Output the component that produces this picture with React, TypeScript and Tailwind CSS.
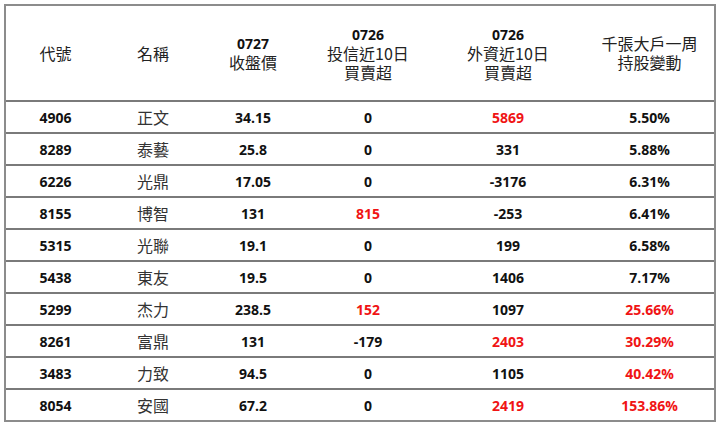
const cols = "grid grid-cols-[99px_96px_104px_126px_154px_129px]";

const cjk = { fontFamily: '"Noto Sans CJK TC", "Noto Sans", sans-serif' };

type Row = {
  code: string;
  name: string;
  close: string;
  trust: string;
  trustRed?: boolean;
  foreign: string;
  foreignRed?: boolean;
  change: string;
  changeRed?: boolean;
};

const rows: Row[] = [
  { code: "4906", name: "正文", close: "34.15", trust: "0", foreign: "5869", foreignRed: true, change: "5.50%" },
  { code: "8289", name: "泰藝", close: "25.8", trust: "0", foreign: "331", change: "5.88%" },
  { code: "6226", name: "光鼎", close: "17.05", trust: "0", foreign: "-3176", change: "6.31%" },
  { code: "8155", name: "博智", close: "131", trust: "815", trustRed: true, foreign: "-253", change: "6.41%" },
  { code: "5315", name: "光聯", close: "19.1", trust: "0", foreign: "199", change: "6.58%" },
  { code: "5438", name: "東友", close: "19.5", trust: "0", foreign: "1406", change: "7.17%" },
  { code: "5299", name: "杰力", close: "238.5", trust: "152", trustRed: true, foreign: "1097", change: "25.66%", changeRed: true },
  { code: "8261", name: "富鼎", close: "131", trust: "-179", foreign: "2403", foreignRed: true, change: "30.29%", changeRed: true },
  { code: "3483", name: "力致", close: "94.5", trust: "0", foreign: "1105", change: "40.42%", changeRed: true },
  { code: "8054", name: "安國", close: "67.2", trust: "0", foreign: "2419", foreignRed: true, change: "153.86%", changeRed: true },
];

function Num({ children, red }: { children: React.ReactNode; red?: boolean }) {
  return (
    <div
      className={`flex items-center justify-center text-[14px] font-bold ${red ? "text-[#f01414]" : "text-[#111]"}`}
    >
      {children}
    </div>
  );
}

function Head({ lines }: { lines: string[] }) {
  return (
    <div className="flex flex-col items-center justify-center text-center text-[16px] leading-[19px] text-[#222]" style={cjk}>
      {lines.map((l, i) =>
        /^\d+$/.test(l) ? (
          <span key={i} className="font-bold text-[14px] leading-[19px] text-[#111]" style={{ fontFamily: '"Open Sans", sans-serif' }}>
            {l}
          </span>
        ) : (
          <span key={i} className="leading-[19px]">{l}</span>
        )
      )}
    </div>
  );
}

export default function App() {
  return (
    <div className="h-[424px] w-[720px] bg-white pl-[4px] pt-[4px]" style={{ fontFamily: '"Open Sans", sans-serif' }}>
      <div className="h-[418px] w-[712px] border-2 border-[#8c8c8c]">
        <div className={`${cols} h-[96px] border-b-2 border-[#7a7a7a]`}>
          <Head lines={["代號"]} />
          <Head lines={["名稱"]} />
          <Head lines={["0727", "收盤價"]} />
          <Head lines={["0726", "投信近10日", "買賣超"]} />
          <Head lines={["0726", "外資近10日", "買賣超"]} />
          <Head lines={["千張大戶一周", "持股變動"]} />
        </div>
        {rows.map((r, i) => (
          <div
            key={r.code}
            className={`${cols} ${i < rows.length - 1 ? "h-[32px] border-b-2 border-[#7a7a7a]" : "h-[30px]"}`}
          >
            <Num>{r.code}</Num>
            <div className="flex items-center justify-center text-[16px] text-[#333]" style={cjk}>
              {r.name}
            </div>
            <Num>{r.close}</Num>
            <Num red={r.trustRed}>{r.trust}</Num>
            <Num red={r.foreignRed}>{r.foreign}</Num>
            <Num red={r.changeRed}>{r.change}</Num>
          </div>
        ))}
      </div>
    </div>
  );
}
